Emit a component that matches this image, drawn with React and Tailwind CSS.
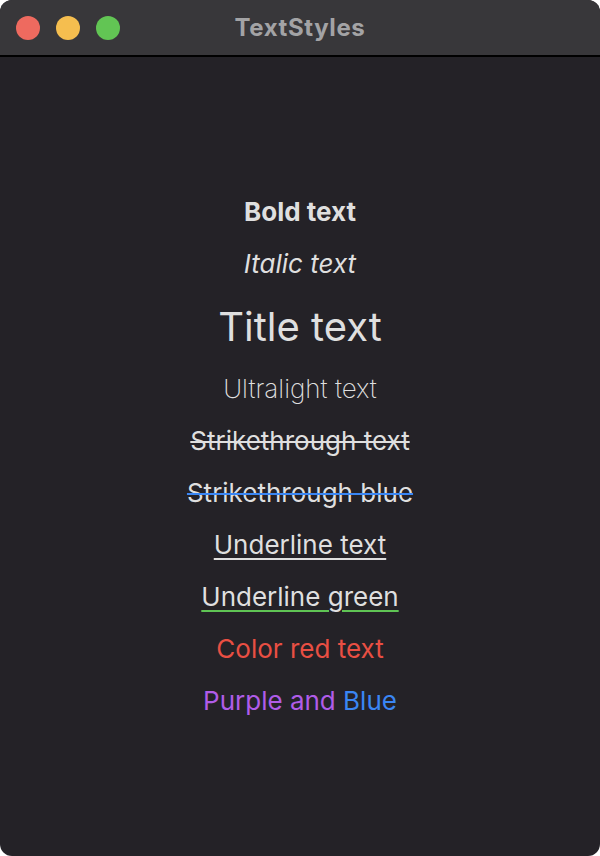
export default function App() {
  return (
    <div className="bg-white w-[600px] h-[856px]" style={{ fontFamily: 'Inter, "Noto Sans", sans-serif' }}>
      <div className="w-full h-full rounded-[12px] overflow-hidden flex flex-col bg-[#242227]">
        {/* Title bar */}
        <div className="relative h-[57px] shrink-0 bg-[#38373a] border-b-2 border-black flex items-center">
          <div className="flex items-center gap-[16px] pl-[16px]">
            <div className="w-[24px] h-[24px] rounded-full bg-[#ee6a5f]" />
            <div className="w-[24px] h-[24px] rounded-full bg-[#f5be4f]" />
            <div className="w-[24px] h-[24px] rounded-full bg-[#62c554]" />
          </div>
          <div className="absolute inset-0 flex items-center justify-center text-[24px] font-bold tracking-[0.6px] text-[#a3a3a5]">
            TextStyles
          </div>
        </div>

        {/* Content */}
        <div className="flex-1 flex flex-col items-center justify-center text-[26px] text-[#dfdfdf]">
          <div className="leading-[52px] font-bold">Bold text</div>
          <div className="leading-[52px] italic">Italic text</div>
          <div className="leading-[73px] text-[40px]">Title text</div>
          <div className="leading-[52px] font-extralight">Ultralight text</div>
          <div className="leading-[52px] line-through decoration-2 decoration-[#dfdfdf]">Strikethrough text</div>
          <div className="leading-[52px] line-through decoration-2 decoration-[#3a86f4]">Strikethrough blue</div>
          <div className="leading-[52px] underline decoration-2 underline-offset-[4px]">Underline text</div>
          <div className="leading-[52px] underline decoration-2 underline-offset-[4px] decoration-[#5fc454]">Underline green</div>
          <div className="leading-[52px] text-[#e94f43]">Color red text</div>
          <div className="leading-[52px]">
            <span className="text-[#b05ce8]">Purple and </span>
            <span className="text-[#3a86f4]">Blue</span>
          </div>
        </div>
      </div>
    </div>
  )
}
